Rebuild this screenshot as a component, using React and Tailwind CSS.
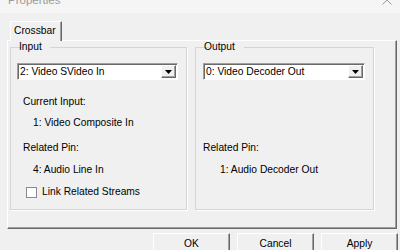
import React from 'react';

function Dropdown({ value, width }) {
  return (
    <div
      className="h-[17px] flex bg-white border border-t-[#a0a0a0] border-l-[#a0a0a0] border-r-white border-b-white shadow-[inset_1px_1px_0_#696969]"
      style={{ width }}
    >
      <div className="flex-1 pl-[2px] pt-[1px] leading-[13px] whitespace-nowrap overflow-hidden">{value}</div>
      <div className="w-[15px] h-[13px] mt-[1px] mr-[1px] flex items-center justify-center bg-[#f0f0f0] border border-t-white border-l-white border-r-[#696969] border-b-[#696969] shadow-[inset_-1px_-1px_0_#a0a0a0]">
        <svg width="7" height="4" viewBox="0 0 7 4">
          <path d="M0 0h7L3.5 4z" fill="#000" />
        </svg>
      </div>
    </div>
  );
}

function Button({ label }) {
  return (
    <button className="w-[77px] h-[23px] pb-[2px] bg-[#f0f0f0] border border-t-white border-l-white border-r-[#696969] border-b-[#696969] shadow-[inset_-1px_-1px_0_#a0a0a0] leading-[12px]">
      {label}
    </button>
  );
}

export default function App() {
  return (
    <div className="w-[400px] h-[250px] overflow-hidden bg-[#f0f0f0] font-['Liberation_Sans',Arial,sans-serif] text-[10.25px] text-black">
      {/* Title bar, mostly scrolled off the top */}
      <div className="h-[13px] bg-[#f5f5f5] flex justify-between overflow-hidden">
        <span className="ml-[8px] -mt-[6px] text-[11.5px] leading-[13px] text-[#9a9a9a]">Properties</span>
        <svg className="mr-[8px] -mt-[5px]" width="10" height="10" viewBox="0 0 10 10">
          <path d="M0.5 0.5l9 9M9.5 0.5l-9 9" stroke="#9a9a9a" strokeWidth="1" fill="none" />
        </svg>
      </div>

      {/* Tab */}
      <div className="pt-[8px] pl-[10px] flex">
        <div className="w-[52px] h-[20px] pl-[3px] pt-[3px] leading-[12px] border-t border-l border-r border-t-white border-l-white border-r-[#696969] shadow-[inset_-1px_0_0_#a0a0a0] relative -mb-px bg-[#f0f0f0]">
          Crossbar
        </div>
      </div>

      {/* Tab panel */}
      <div className="ml-[7px] w-[390px] h-[189px] border border-t-white border-l-white border-r-[#696969] border-b-[#696969] shadow-[inset_-1px_-1px_0_#a0a0a0] pl-[2px] flex gap-[8px]">
        <fieldset className="w-[177px] h-[169px] border border-[#d5d5d5] shadow-[1px_1px_0_white] pl-[6px]">
          <legend className="ml-[6px] -translate-x-[6px] px-[2px] leading-[12px]">Input</legend>
          <div className="mt-[10px]">
            <Dropdown value="2: Video SVideo In" width={161} />
          </div>
          <div className="mt-[16px] ml-[6px] leading-[12px]">Current Input:</div>
          <div className="mt-[9px] ml-[16px] leading-[12px]">1: Video Composite In</div>
          <div className="mt-[13px] ml-[6px] leading-[12px]">Related Pin:</div>
          <div className="mt-[10px] ml-[16px] leading-[12px]">4: Audio Line In</div>
          <div className="mt-[10px] ml-[9px] flex items-center leading-[12px]">
            <span className="w-[11px] h-[11px] bg-white border border-[#8a8a8a]" />
            <span className="ml-[5px]">Link Related Streams</span>
          </div>
        </fieldset>

        <fieldset className="w-[179px] h-[169px] border border-[#d5d5d5] shadow-[1px_1px_0_white] pl-[7px]">
          <legend className="ml-[6px] -translate-x-[7px] px-[2px] leading-[12px]">Output</legend>
          <div className="mt-[10px]">
            <Dropdown value="0: Video Decoder Out" width={162} />
          </div>
          <div className="mt-[62px] leading-[12px]">Related Pin:</div>
          <div className="mt-[10px] ml-[17px] leading-[12px]">1: Audio Decoder Out</div>
        </fieldset>
      </div>

      {/* Buttons */}
      <div className="mt-[4px] pl-[153px] flex gap-[7px]">
        <Button label="OK" />
        <Button label="Cancel" />
        <Button label="Apply" />
      </div>
    </div>
  );
}
